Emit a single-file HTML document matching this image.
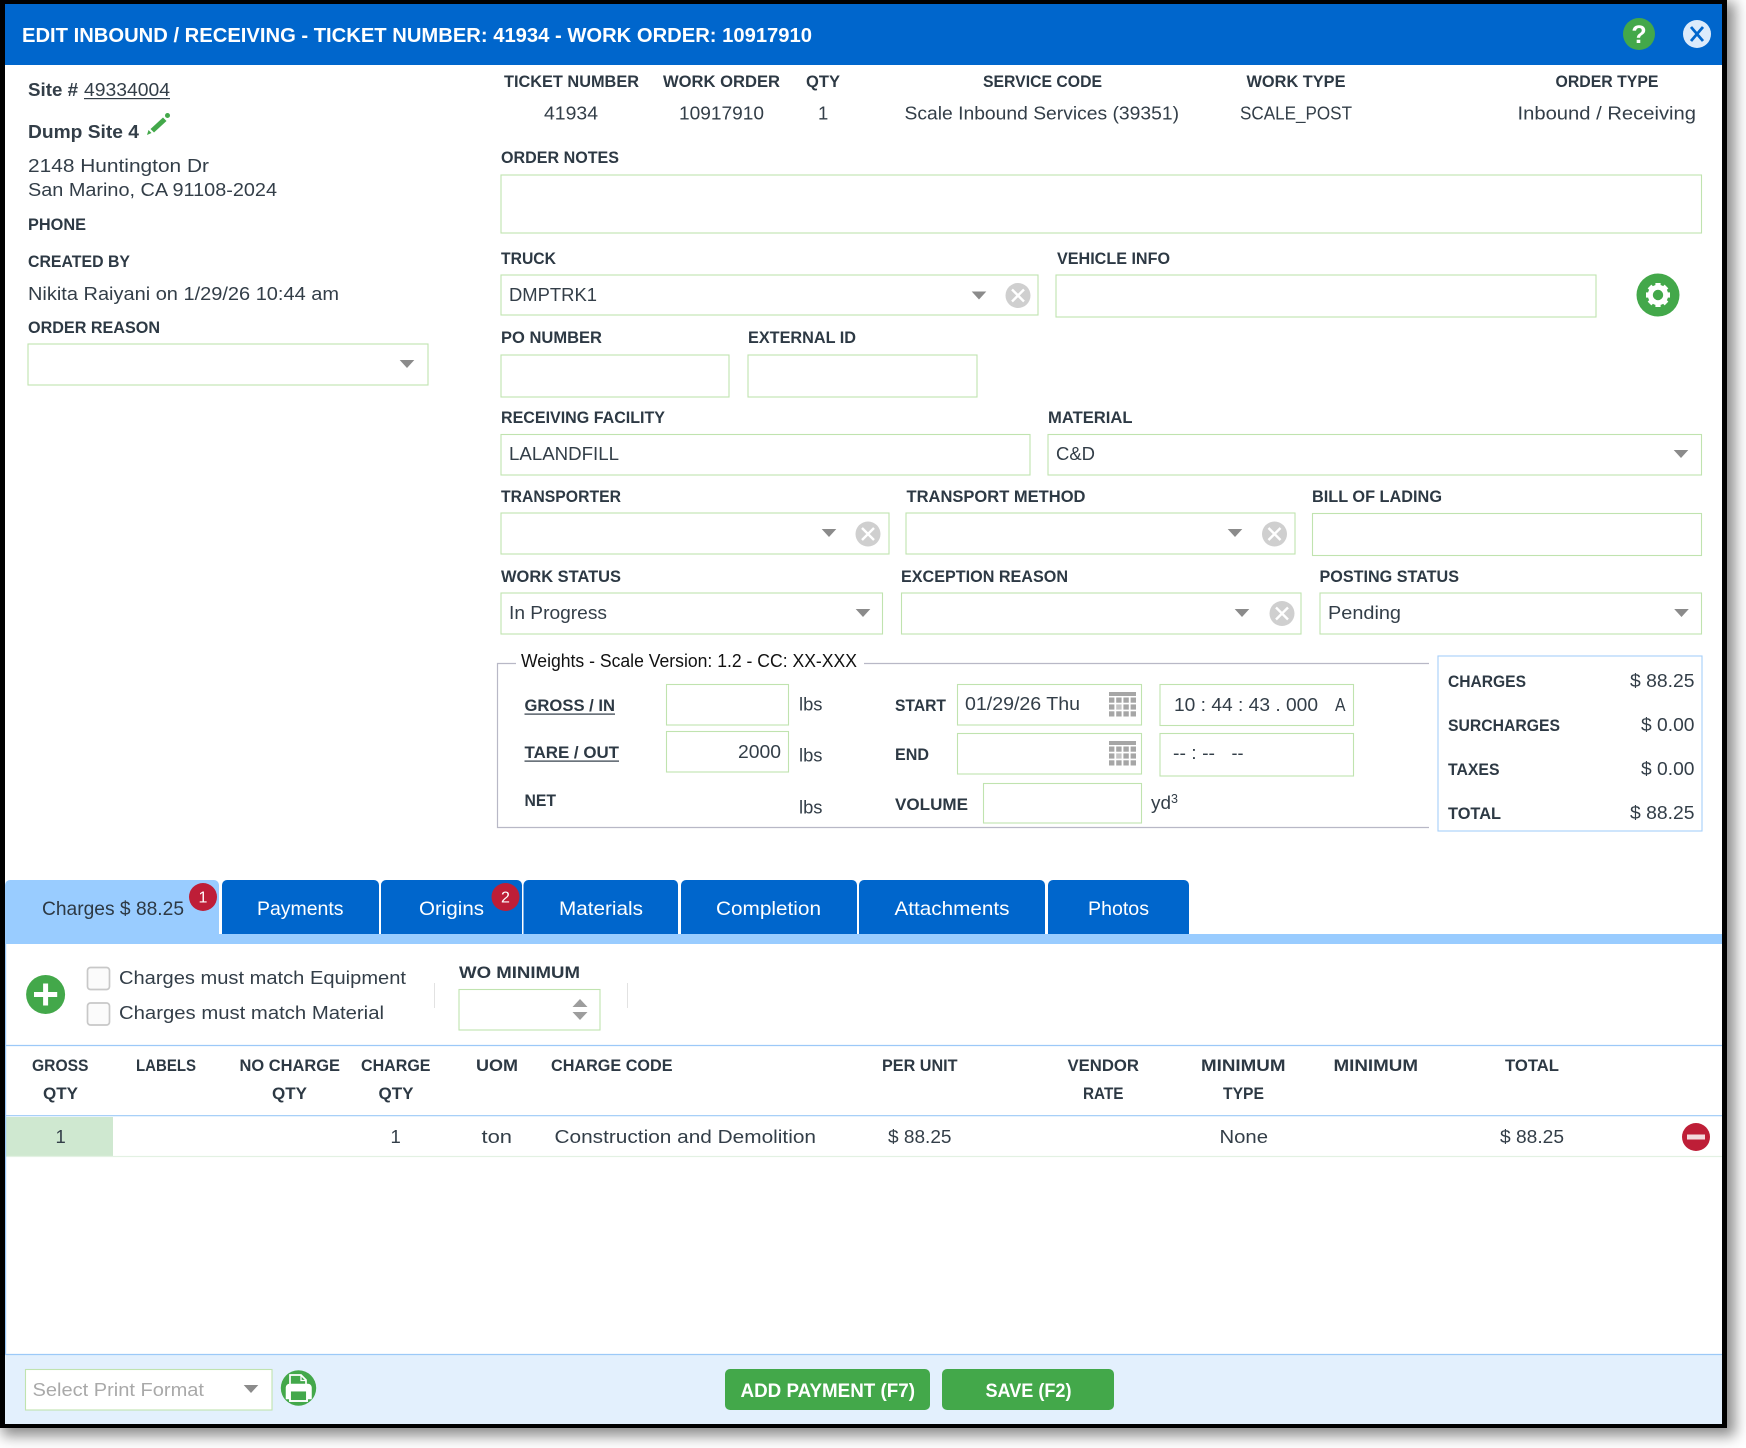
<!DOCTYPE html>
<html lang="en">
<head>
<meta charset="utf-8">
<title>Edit Inbound / Receiving</title>
<style>
html,body{margin:0;padding:0;background:#fff;width:1746px;height:1448px;overflow:hidden}
#frame{position:absolute;left:0;top:0;width:1726.5px;height:1427.5px;background:#000;box-shadow:5px 5px 13px 3px rgba(0,0,0,.45)}
svg{position:absolute;left:0;top:0;display:block}
text{font-family:"Liberation Sans",sans-serif;fill:#333e48;font-size:18.5px;white-space:pre}
.l{font-weight:700;font-size:17px;fill:#2d3944;transform:translateY(-1px)}
.k{fill:#111;font-size:18px}
.w{fill:#fff;font-size:19.5px}
.t{font-size:19.5px;fill:#2d3944}
.bt{font-weight:700;fill:#fff;font-size:19px}
.bd{fill:#fff;font-size:16px;text-anchor:middle}
.b{fill:#fff;stroke:#c0e3af;stroke-width:1.1}
.ln{stroke:#9cc9f8;stroke-width:1.2}
</style>
</head>
<body>
<div id="frame"></div>
<svg width="1746" height="1448" viewBox="0 0 1746 1448" xmlns="http://www.w3.org/2000/svg">
<defs>
<g id="ar"><path d="M-7.3-4H7.3L0 4Z" fill="#8b8b8b"/></g>
<g id="cl"><circle r="12.5" fill="#cfcfcf"/><path d="M-6-6 6 6M6-6-6 6" stroke="#fff" stroke-width="2.4" fill="none"/></g>
<g id="cal" fill="#a6a6a6">
<rect x="0" y="0" width="27" height="4"/>
<rect x="0" y="5.5" width="5.4" height="5.2"/><rect x="7.2" y="5.5" width="5.4" height="5.2"/><rect x="14.4" y="5.5" width="5.4" height="5.2"/><rect x="21.6" y="5.5" width="5.4" height="5.2"/>
<rect x="0" y="12.4" width="5.4" height="5.2"/><rect x="7.2" y="12.4" width="5.4" height="5.2" fill="#c4c4c4"/><rect x="14.4" y="12.4" width="5.4" height="5.2"/><rect x="21.6" y="12.4" width="5.4" height="5.2"/>
<rect x="0" y="19.3" width="5.4" height="5.2"/><rect x="7.2" y="19.3" width="5.4" height="5.2"/><rect x="14.4" y="19.3" width="5.4" height="5.2"/><rect x="21.6" y="19.3" width="5.4" height="5.2"/>
</g>
</defs>

<!-- modal -->
<rect x="5" y="4" width="1717" height="1420" fill="#fff" rx="2"/>
<rect x="5" y="4" width="1717" height="61" fill="#0066cc"/>
<text x="22" y="42" font-weight="700" style="fill:#fff;font-size:20.5px" textLength="790" lengthAdjust="spacingAndGlyphs">EDIT INBOUND / RECEIVING - TICKET NUMBER: 41934 - WORK ORDER: 10917910</text>
<circle cx="1639" cy="34" r="16" fill="#43a84a"/>
<text x="1639" y="43" text-anchor="middle" font-weight="700" style="fill:#fff;font-size:25px">?</text>
<circle cx="1697" cy="34" r="14" fill="#dcebfb"/>
<path d="M1691 27 1703 41M1703 27 1691 41" stroke="#0066cc" stroke-width="2.8" fill="none"/>

<!-- left column -->
<text x="28" y="96" font-weight="700" style="font-size:18px" textLength="50" lengthAdjust="spacingAndGlyphs">Site #</text>
<text x="84" y="96" style="font-size:18px" textLength="86" lengthAdjust="spacingAndGlyphs">49334004</text>
<rect x="84" y="98" width="86" height="1.2" fill="#333e48"/>
<path d="M147 135 148.5 130 151.5 133Z" fill="#43a84a"/>
<path d="M150.5 129 163 117.5 166.5 121 154 132.5Z" fill="#43a84a"/>
<circle cx="167.5" cy="115.5" r="2.5" fill="#43a84a"/>
<text x="28" y="138" font-weight="700" style="font-size:18px" textLength="111" lengthAdjust="spacingAndGlyphs">Dump Site 4</text>
<text x="28" y="172" textLength="181" lengthAdjust="spacingAndGlyphs">2148 Huntington Dr</text>
<text x="28" y="196" textLength="249" lengthAdjust="spacingAndGlyphs">San Marino, CA 91108-2024</text>
<text class="l" x="28" y="231" textLength="58" lengthAdjust="spacingAndGlyphs">PHONE</text>
<text class="l" x="28" y="268" textLength="102" lengthAdjust="spacingAndGlyphs">CREATED BY</text>
<text x="28" y="300" textLength="311" lengthAdjust="spacingAndGlyphs">Nikita Raiyani on 1/29/26 10:44 am</text>
<text class="l" x="28" y="334" textLength="132" lengthAdjust="spacingAndGlyphs">ORDER REASON</text>
<rect class="b" x="28" y="344" width="400" height="41"/>
<use href="#ar" x="407" y="364"/>

<!-- header info -->
<text class="l" x="504" y="88" textLength="135" lengthAdjust="spacingAndGlyphs">TICKET NUMBER</text>
<text class="l" x="663" y="88" textLength="117" lengthAdjust="spacingAndGlyphs">WORK ORDER</text>
<text class="l" x="806" y="88" textLength="34" lengthAdjust="spacingAndGlyphs">QTY</text>
<text class="l" x="983" y="88" textLength="119" lengthAdjust="spacingAndGlyphs">SERVICE CODE</text>
<text class="l" x="1246.5" y="88" textLength="99" lengthAdjust="spacingAndGlyphs">WORK TYPE</text>
<text class="l" x="1555.5" y="88" textLength="103" lengthAdjust="spacingAndGlyphs">ORDER TYPE</text>
<text x="544" y="119.5" textLength="54" lengthAdjust="spacingAndGlyphs">41934</text>
<text x="679" y="119.5" textLength="85" lengthAdjust="spacingAndGlyphs">10917910</text>
<text x="818" y="119.5">1</text>
<text x="904.5" y="119.5" textLength="274.5" lengthAdjust="spacingAndGlyphs">Scale Inbound Services (39351)</text>
<text x="1240" y="119.5" textLength="112" lengthAdjust="spacingAndGlyphs">SCALE_POST</text>
<text x="1517.5" y="119.5" textLength="178.5" lengthAdjust="spacingAndGlyphs">Inbound / Receiving</text>

<!-- form -->
<text class="l" x="501" y="164" textLength="118" lengthAdjust="spacingAndGlyphs">ORDER NOTES</text>
<rect class="b" x="501" y="175" width="1200.5" height="58"/>

<text class="l" x="501" y="265" textLength="55" lengthAdjust="spacingAndGlyphs">TRUCK</text>
<rect class="b" x="501" y="275" width="537" height="40"/>
<text x="509" y="301" textLength="88" lengthAdjust="spacingAndGlyphs">DMPTRK1</text>
<use href="#ar" x="979" y="295.5"/>
<use href="#cl" x="1018" y="295.5"/>
<text class="l" x="1057" y="265" textLength="113" lengthAdjust="spacingAndGlyphs">VEHICLE INFO</text>
<rect class="b" x="1056" y="275" width="540" height="42"/>
<circle cx="1658" cy="295" r="21.5" fill="#43a84a"/>
<g transform="translate(1658 295)" fill="#fff">
<circle r="7.7" fill="none" stroke="#fff" stroke-width="5"/>
<rect x="-2.6" y="-12" width="5.2" height="5"/><rect x="-2.6" y="7" width="5.2" height="5"/>
<rect x="-12" y="-2.6" width="5" height="5.2"/><rect x="7" y="-2.6" width="5" height="5.2"/>
<rect x="-2.6" y="-12" width="5.2" height="5" transform="rotate(45)"/><rect x="-2.6" y="-12" width="5.2" height="5" transform="rotate(135)"/>
<rect x="-2.6" y="-12" width="5.2" height="5" transform="rotate(225)"/><rect x="-2.6" y="-12" width="5.2" height="5" transform="rotate(315)"/>
</g>

<text class="l" x="501" y="344" textLength="101" lengthAdjust="spacingAndGlyphs">PO NUMBER</text>
<text class="l" x="748" y="344" textLength="108" lengthAdjust="spacingAndGlyphs">EXTERNAL ID</text>
<rect class="b" x="501" y="355" width="228" height="42"/>
<rect class="b" x="748" y="355" width="229" height="42"/>

<text class="l" x="501" y="424" textLength="164" lengthAdjust="spacingAndGlyphs">RECEIVING FACILITY</text>
<text class="l" x="1048" y="424" textLength="84.5" lengthAdjust="spacingAndGlyphs">MATERIAL</text>
<rect class="b" x="501" y="434.5" width="529" height="40.5"/>
<text x="509" y="460" textLength="110" lengthAdjust="spacingAndGlyphs">LALANDFILL</text>
<rect class="b" x="1048" y="434.5" width="653.5" height="40.5"/>
<text x="1056" y="460" textLength="39" lengthAdjust="spacingAndGlyphs">C&amp;D</text>
<use href="#ar" x="1681" y="454"/>

<text class="l" x="501" y="503" textLength="120" lengthAdjust="spacingAndGlyphs">TRANSPORTER</text>
<text class="l" x="906.5" y="503" textLength="179" lengthAdjust="spacingAndGlyphs">TRANSPORT METHOD</text>
<text class="l" x="1312" y="503" textLength="130" lengthAdjust="spacingAndGlyphs">BILL OF LADING</text>
<rect class="b" x="501" y="513" width="388" height="41"/>
<use href="#ar" x="829" y="533"/>
<use href="#cl" x="868" y="534"/>
<rect class="b" x="906" y="513" width="389" height="41"/>
<use href="#ar" x="1235" y="533"/>
<use href="#cl" x="1274.5" y="534"/>
<rect class="b" x="1312.5" y="513.5" width="389" height="42"/>

<text class="l" x="501" y="583" textLength="120" lengthAdjust="spacingAndGlyphs">WORK STATUS</text>
<text class="l" x="901" y="583" textLength="167" lengthAdjust="spacingAndGlyphs">EXCEPTION REASON</text>
<text class="l" x="1319.5" y="583" textLength="139.5" lengthAdjust="spacingAndGlyphs">POSTING STATUS</text>
<rect class="b" x="501" y="593" width="381.5" height="41"/>
<text x="509" y="619" textLength="98" lengthAdjust="spacingAndGlyphs">In Progress</text>
<use href="#ar" x="863" y="613"/>
<rect class="b" x="901.5" y="593" width="399.5" height="41"/>
<use href="#ar" x="1242" y="613"/>
<use href="#cl" x="1282" y="613.5"/>
<rect class="b" x="1320" y="593" width="381.5" height="41"/>
<text x="1328" y="619" textLength="73" lengthAdjust="spacingAndGlyphs">Pending</text>
<use href="#ar" x="1681.5" y="613"/>

<!-- weights fieldset -->
<path d="M516 663.5H497.5V827.5H1429M864 663.5H1429" fill="none" stroke="#b8b8c6" stroke-width="1.2"/>
<text class="k" x="521" y="667" textLength="336" lengthAdjust="spacingAndGlyphs">Weights - Scale Version: 1.2 - CC: XX-XXX</text>
<text class="l" x="524.5" y="712" textLength="90.5" lengthAdjust="spacingAndGlyphs">GROSS / IN</text>
<rect x="524.5" y="713.5" width="90.5" height="1.2" fill="#2d3944"/>
<text class="l" x="524.5" y="759" textLength="94.5" lengthAdjust="spacingAndGlyphs">TARE / OUT</text>
<rect x="524.5" y="760.5" width="94.5" height="1.2" fill="#2d3944"/>
<text class="l" x="524.5" y="807" textLength="31.5" lengthAdjust="spacingAndGlyphs">NET</text>
<rect class="b" x="666.5" y="684.5" width="122" height="40.5"/>
<rect class="b" x="666.5" y="731.5" width="122" height="40.5"/>
<text x="738" y="758" textLength="43" lengthAdjust="spacingAndGlyphs">2000</text>
<text x="799" y="710.5" textLength="23.5" lengthAdjust="spacingAndGlyphs">lbs</text>
<text x="799" y="761.5" textLength="23.5" lengthAdjust="spacingAndGlyphs">lbs</text>
<text x="799" y="813.5" textLength="23.5" lengthAdjust="spacingAndGlyphs">lbs</text>
<text class="l" x="895" y="712" textLength="51" lengthAdjust="spacingAndGlyphs">START</text>
<text class="l" x="895" y="761" textLength="34" lengthAdjust="spacingAndGlyphs">END</text>
<text class="l" x="895" y="811" textLength="73" lengthAdjust="spacingAndGlyphs">VOLUME</text>
<rect class="b" x="957.5" y="684.5" width="184" height="40.5"/>
<text x="965" y="710" textLength="115" lengthAdjust="spacingAndGlyphs">01/29/26 Thu</text>
<use href="#cal" x="1109" y="692"/>
<rect class="b" x="957.5" y="733.5" width="184" height="40.5"/>
<use href="#cal" x="1109" y="741"/>
<rect class="b" x="1160" y="684.5" width="193.5" height="41"/>
<text x="1174" y="711" textLength="144" lengthAdjust="spacingAndGlyphs">10 : 44 : 43 . 000</text>
<text x="1335" y="711" textLength="10.5" lengthAdjust="spacingAndGlyphs">A</text>
<rect class="b" x="1160" y="733.5" width="193.5" height="42.5"/>
<text x="1173" y="759" textLength="42" lengthAdjust="spacingAndGlyphs">-- : --</text>
<text x="1231.5" y="759" textLength="12" lengthAdjust="spacingAndGlyphs">--</text>
<rect class="b" x="983.5" y="783.5" width="158" height="39.5"/>
<text x="1151" y="809" textLength="20" lengthAdjust="spacingAndGlyphs">yd</text>
<text x="1171" y="803" style="font-size:12.5px">3</text>

<!-- totals -->
<rect x="1438" y="656" width="264" height="175" fill="#fff" stroke="#a6cff9" stroke-width="1.1"/>
<text class="l" x="1448" y="688" textLength="78" lengthAdjust="spacingAndGlyphs">CHARGES</text>
<text class="l" x="1448" y="732" textLength="112" lengthAdjust="spacingAndGlyphs">SURCHARGES</text>
<text class="l" x="1448" y="776" textLength="51.5" lengthAdjust="spacingAndGlyphs">TAXES</text>
<text class="l" x="1448" y="820" textLength="53" lengthAdjust="spacingAndGlyphs">TOTAL</text>
<text x="1630" y="687" textLength="64.5" lengthAdjust="spacingAndGlyphs">$ 88.25</text>
<text x="1641" y="731" textLength="53.5" lengthAdjust="spacingAndGlyphs">$ 0.00</text>
<text x="1641" y="775" textLength="53.5" lengthAdjust="spacingAndGlyphs">$ 0.00</text>
<text x="1630" y="819" textLength="64.5" lengthAdjust="spacingAndGlyphs">$ 88.25</text>

<!-- tabs -->
<rect x="5" y="934" width="1717" height="10" fill="#99ccff"/>
<path d="M5 944V885a5 5 0 0 1 5-5H214a5 5 0 0 1 5 5V944Z" fill="#99ccff"/>
<path d="M222 934V885a5 5 0 0 1 5-5H374a5 5 0 0 1 5 5V934Z" fill="#0066cc"/>
<path d="M381 934V885a5 5 0 0 1 5-5H517a5 5 0 0 1 5 5V934Z" fill="#0066cc"/>
<path d="M523.5 934V885a5 5 0 0 1 5-5H674a5 5 0 0 1 4 5V934Z" fill="#0066cc"/>
<path d="M681 934V885a5 5 0 0 1 5-5H852a5 5 0 0 1 5 5V934Z" fill="#0066cc"/>
<path d="M859 934V885a5 5 0 0 1 5-5H1040a5 5 0 0 1 5 5V934Z" fill="#0066cc"/>
<path d="M1048 934V885a5 5 0 0 1 5-5H1184a5 5 0 0 1 5 5V934Z" fill="#0066cc"/>
<text class="t" x="42" y="915" textLength="142" lengthAdjust="spacingAndGlyphs">Charges $ 88.25</text>
<text class="w" x="257" y="915" textLength="86.5" lengthAdjust="spacingAndGlyphs">Payments</text>
<text class="w" x="419" y="915" textLength="65" lengthAdjust="spacingAndGlyphs">Origins</text>
<text class="w" x="559" y="915" textLength="84" lengthAdjust="spacingAndGlyphs">Materials</text>
<text class="w" x="716" y="915" textLength="105" lengthAdjust="spacingAndGlyphs">Completion</text>
<text class="w" x="894.5" y="915" textLength="115" lengthAdjust="spacingAndGlyphs">Attachments</text>
<text class="w" x="1088" y="915" textLength="61" lengthAdjust="spacingAndGlyphs">Photos</text>
<circle cx="203" cy="897" r="14" fill="#be1e37"/>
<text class="bd" x="203" y="902.5">1</text>
<circle cx="505.5" cy="897" r="14" fill="#be1e37"/>
<text class="bd" x="505.5" y="902.5">2</text>

<!-- charges toolbar -->
<circle cx="45.6" cy="994.5" r="19.5" fill="#43a84a"/>
<path d="M34 994.5H57.2M45.6 983.5V1005.5" stroke="#fff" stroke-width="5" fill="none"/>
<rect x="87.5" y="967.5" width="22" height="22" rx="3" fill="#fbfbfb" stroke="#c8c8c8" stroke-width="1.7"/>
<rect x="87.5" y="1003" width="22" height="22" rx="3" fill="#fbfbfb" stroke="#c8c8c8" stroke-width="1.7"/>
<text x="119" y="984" textLength="287" lengthAdjust="spacingAndGlyphs">Charges must match Equipment</text>
<text x="119" y="1019" textLength="265" lengthAdjust="spacingAndGlyphs">Charges must match Material</text>
<path d="M434.5 983V1008M627.5 983V1008" stroke="#e2e2e2" stroke-width="1"/>
<text class="l" x="459" y="979" textLength="121" lengthAdjust="spacingAndGlyphs">WO MINIMUM</text>
<rect class="b" x="459" y="989.5" width="141" height="40.5"/>
<path d="M572.5 1007H587.5L580 999Z" fill="#9d9d9d"/>
<path d="M572.5 1012H587.5L580 1020Z" fill="#9d9d9d"/>

<!-- table -->
<path class="ln" d="M5 1045.5H1722M5 1115.7H1722"/>
<text class="l" x="32" y="1072" textLength="56.5" lengthAdjust="spacingAndGlyphs">GROSS</text>
<text class="l" x="43" y="1100" textLength="35" lengthAdjust="spacingAndGlyphs">QTY</text>
<text class="l" x="136" y="1072" textLength="60" lengthAdjust="spacingAndGlyphs">LABELS</text>
<text class="l" x="239.5" y="1072" textLength="100.5" lengthAdjust="spacingAndGlyphs">NO CHARGE</text>
<text class="l" x="272" y="1100" textLength="35" lengthAdjust="spacingAndGlyphs">QTY</text>
<text class="l" x="361" y="1072" textLength="69.5" lengthAdjust="spacingAndGlyphs">CHARGE</text>
<text class="l" x="378.5" y="1100" textLength="35" lengthAdjust="spacingAndGlyphs">QTY</text>
<text class="l" x="476" y="1072" textLength="42" lengthAdjust="spacingAndGlyphs">UOM</text>
<text class="l" x="551" y="1072" textLength="121.5" lengthAdjust="spacingAndGlyphs">CHARGE CODE</text>
<text class="l" x="882" y="1072" textLength="75.5" lengthAdjust="spacingAndGlyphs">PER UNIT</text>
<text class="l" x="1067.5" y="1072" textLength="71.5" lengthAdjust="spacingAndGlyphs">VENDOR</text>
<text class="l" x="1083" y="1100" textLength="40.5" lengthAdjust="spacingAndGlyphs">RATE</text>
<text class="l" x="1201" y="1072" textLength="84.5" lengthAdjust="spacingAndGlyphs">MINIMUM</text>
<text class="l" x="1223" y="1100" textLength="41" lengthAdjust="spacingAndGlyphs">TYPE</text>
<text class="l" x="1333.5" y="1072" textLength="84.5" lengthAdjust="spacingAndGlyphs">MINIMUM</text>
<text class="l" x="1505" y="1072" textLength="54" lengthAdjust="spacingAndGlyphs">TOTAL</text>
<rect x="6" y="1117" width="107" height="39" fill="#cfe8d0"/>
<path d="M5 1156.5H1722" stroke="#e3f1e3" stroke-width="1.2"/>
<text x="55.5" y="1143">1</text>
<text x="390.5" y="1143">1</text>
<text x="481.5" y="1143" textLength="30.5" lengthAdjust="spacingAndGlyphs">ton</text>
<text x="554.5" y="1143" textLength="261.5" lengthAdjust="spacingAndGlyphs">Construction and Demolition</text>
<text x="888" y="1143" textLength="63.5" lengthAdjust="spacingAndGlyphs">$ 88.25</text>
<text x="1219.5" y="1143" textLength="48.5" lengthAdjust="spacingAndGlyphs">None</text>
<text x="1500" y="1143" textLength="64" lengthAdjust="spacingAndGlyphs">$ 88.25</text>
<circle cx="1696" cy="1137" r="14" fill="#be1e37"/>
<rect x="1687" y="1134.5" width="18" height="5" fill="#f3d9dd"/>

<!-- left edge line -->
<rect x="5" y="944" width="1.2" height="411" fill="#9cc9f8"/>

<!-- footer -->
<rect x="5" y="1355" width="1717" height="69" fill="#e3f0fd"/>
<path class="ln" d="M5 1354.5H1722"/>
<rect class="b" x="25.5" y="1369.5" width="246.5" height="40.5"/>
<text x="32.5" y="1396" style="fill:#a9a9a9" textLength="171.5" lengthAdjust="spacingAndGlyphs">Select Print Format</text>
<use href="#ar" x="251" y="1389"/>
<circle cx="298.5" cy="1388" r="17.7" fill="#43a84a"/>
<path d="M290 1384.5V1375H301L306 1380V1384.5" fill="#43a84a" stroke="#fff" stroke-width="1.7"/>
<path d="M301 1375V1380.5H306" fill="none" stroke="#fff" stroke-width="1.3"/>
<path d="M290 1398.5H286.5V1387.5a3 3 0 0 1 3-3H308a3 3 0 0 1 3 3V1398.5H307" fill="#fff" stroke="#fff" stroke-width="1.5"/>
<rect x="290" y="1390.5" width="17" height="10.5" fill="#43a84a" stroke="#fff" stroke-width="1.9"/>
<rect x="725" y="1369" width="205" height="41" rx="5" fill="#43a84a"/>
<text class="bt" x="740.5" y="1397" textLength="174.5" lengthAdjust="spacingAndGlyphs">ADD PAYMENT (F7)</text>
<rect x="942" y="1369" width="172" height="41" rx="5" fill="#43a84a"/>
<text class="bt" x="985.5" y="1397" textLength="86" lengthAdjust="spacingAndGlyphs">SAVE (F2)</text>
</svg>
</body>
</html>
